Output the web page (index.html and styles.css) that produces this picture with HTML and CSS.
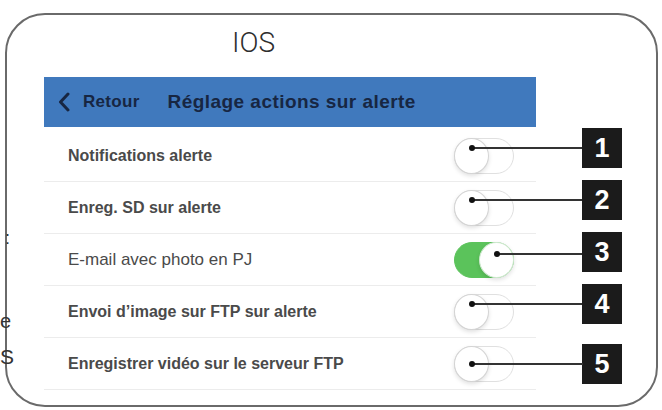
FILE: index.html
```html
<!DOCTYPE html>
<html lang="fr">
<head>
<meta charset="utf-8">
<title>IOS - Réglage actions sur alerte</title>
<link rel="stylesheet" href="styles.css">
</head>
<body>
<div class="frame">
  <div class="title">IOS</div>
  <div class="bar">
    <span class="back"><svg class="chev" width="12" height="20" viewBox="0 0 12 20"><path d="M10 2 L2.5 10 L10 18" fill="none" stroke="#172642" stroke-width="3" stroke-linecap="round" stroke-linejoin="round"/></svg>Retour</span>
    <span class="head">Réglage actions sur alerte</span>
  </div>
  <div class="list">
    <div class="row">
      <div class="cell"><span class="label">Notifications alerte</span><span class="toggle"><span class="knob"><span class="lead"></span></span></span></div>
      <div class="badge up">1</div>
    </div>
    <div class="row">
      <div class="cell"><span class="label">Enreg. SD sur alerte</span><span class="toggle"><span class="knob"><span class="lead"></span></span></span></div>
      <div class="badge up">2</div>
    </div>
    <div class="row">
      <div class="cell"><span class="label light">E-mail avec photo en PJ</span><span class="toggle on"><span class="knob"><span class="lead"></span></span></span></div>
      <div class="badge up">3</div>
    </div>
    <div class="row">
      <div class="cell"><span class="label">Envoi d’image sur FTP sur alerte</span><span class="toggle"><span class="knob"><span class="lead"></span></span></span></div>
      <div class="badge up">4</div>
    </div>
    <div class="row last">
      <div class="cell"><span class="label">Enregistrer vidéo sur le serveur FTP</span><span class="toggle"><span class="knob"><span class="lead"></span></span></span></div>
      <div class="badge">5</div>
    </div>
  </div>
</div>
<span class="frag frag-colon">:</span>
<span class="frag frag-e">e</span>
<span class="frag frag-s">S</span>
</body>
</html>
```

FILE: styles.css
```css
html, body {
  margin: 0;
  padding: 0;
  background: #ffffff;
}
body {
  width: 662px;
  height: 410px;
  overflow: hidden;
  position: relative;
  font-family: "Liberation Sans", Arial, sans-serif;
}
.frame {
  box-sizing: border-box;
  margin: 13px 0 0 5px;
  width: 653px;
  height: 394px;
  border: 2px solid #6a6a6a;
  border-radius: 40px;
  background: #fff;
}
.title {
  margin: 12px 0 0 225px;
  font-family: Roboto, "Liberation Sans", sans-serif;
  font-weight: 300;
  font-size: 28px;
  line-height: 32px;
  color: #2e2e2e;
}
.bar {
  box-sizing: border-box;
  margin: 18px 0 0 37px;
  width: 492px;
  height: 50px;
  background: #4079bd;
  display: flex;
  align-items: center;
  padding-left: 14px;
  color: #172642;
  font-weight: 700;
}
.back {
  display: flex;
  align-items: center;
  font-size: 17px;
  letter-spacing: 0.3px;
}
.chev {
  margin-right: 13px;
}
.head {
  margin-left: 28px;
  font-size: 19px;
  letter-spacing: 0.45px;
}
.list {
  margin-left: 37px;
  padding-top: 3px;
}
.row {
  display: flex;
  align-items: center;
  height: 52px;
}
.cell {
  box-sizing: border-box;
  width: 492px;
  height: 52px;
  display: flex;
  align-items: center;
  padding-left: 24px;
  padding-right: 22px;
  border-bottom: 1px solid #ececec;
}
.label {
  flex: 1;
  font-size: 16px;
  font-weight: 700;
  color: #4a4a4a;
}
.label.light {
  font-weight: 400;
  font-size: 17px;
  color: #4a4a4a;
}
.toggle {
  box-sizing: border-box;
  position: relative;
  width: 60px;
  height: 36px;
  border-radius: 18px;
  border: 1px solid #e0e0e0;
  background: #fff;
}
.toggle.on {
  background: #5bc35b;
  border-color: #5bc35b;
}
.knob {
  position: absolute;
  left: -1px;
  top: -1px;
  box-sizing: border-box;
  width: 35px;
  height: 36px;
  border-radius: 50%;
  border: 1px solid #d4d4d4;
  background: #fff;
  box-shadow: 0 2px 4px rgba(0, 0, 0, 0.12);
}
.toggle.on .knob {
  left: auto;
  right: -1px;
  border-color: #cfe9cf;
}
.lead {
  position: absolute;
  left: 50%;
  top: calc(50% - 8px);
  width: 111px;
  height: 2px;
  margin-top: -1px;
  background: #333;
}
.toggle.on .lead {
  width: 85px;
  top: calc(50% - 6px);
}
.row.last .lead {
  top: 50%;
}
.lead::before {
  content: "";
  position: absolute;
  left: -3px;
  top: -2px;
  width: 6px;
  height: 6px;
  border-radius: 50%;
  background: #111;
}
.badge {
  margin-left: 46px;
  width: 40px;
  height: 40px;
  background: #1b1b1b;
  color: #fff;
  font-weight: 700;
  font-size: 27px;
  line-height: 40px;
  text-align: center;
}
.badge.up {
  transform: translateY(-8px);
}
.frag {
  position: absolute;
  left: 0;
  font-family: "Liberation Sans", Arial, sans-serif;
  color: #333;
}
.frag-colon {
  left: 5px;
  top: 228px;
  font-size: 18px;
  line-height: 20px;
}
.frag-e {
  top: 310px;
  font-size: 20px;
  line-height: 22px;
}
.frag-s {
  top: 346px;
  font-size: 21px;
  line-height: 22px;
}
```
